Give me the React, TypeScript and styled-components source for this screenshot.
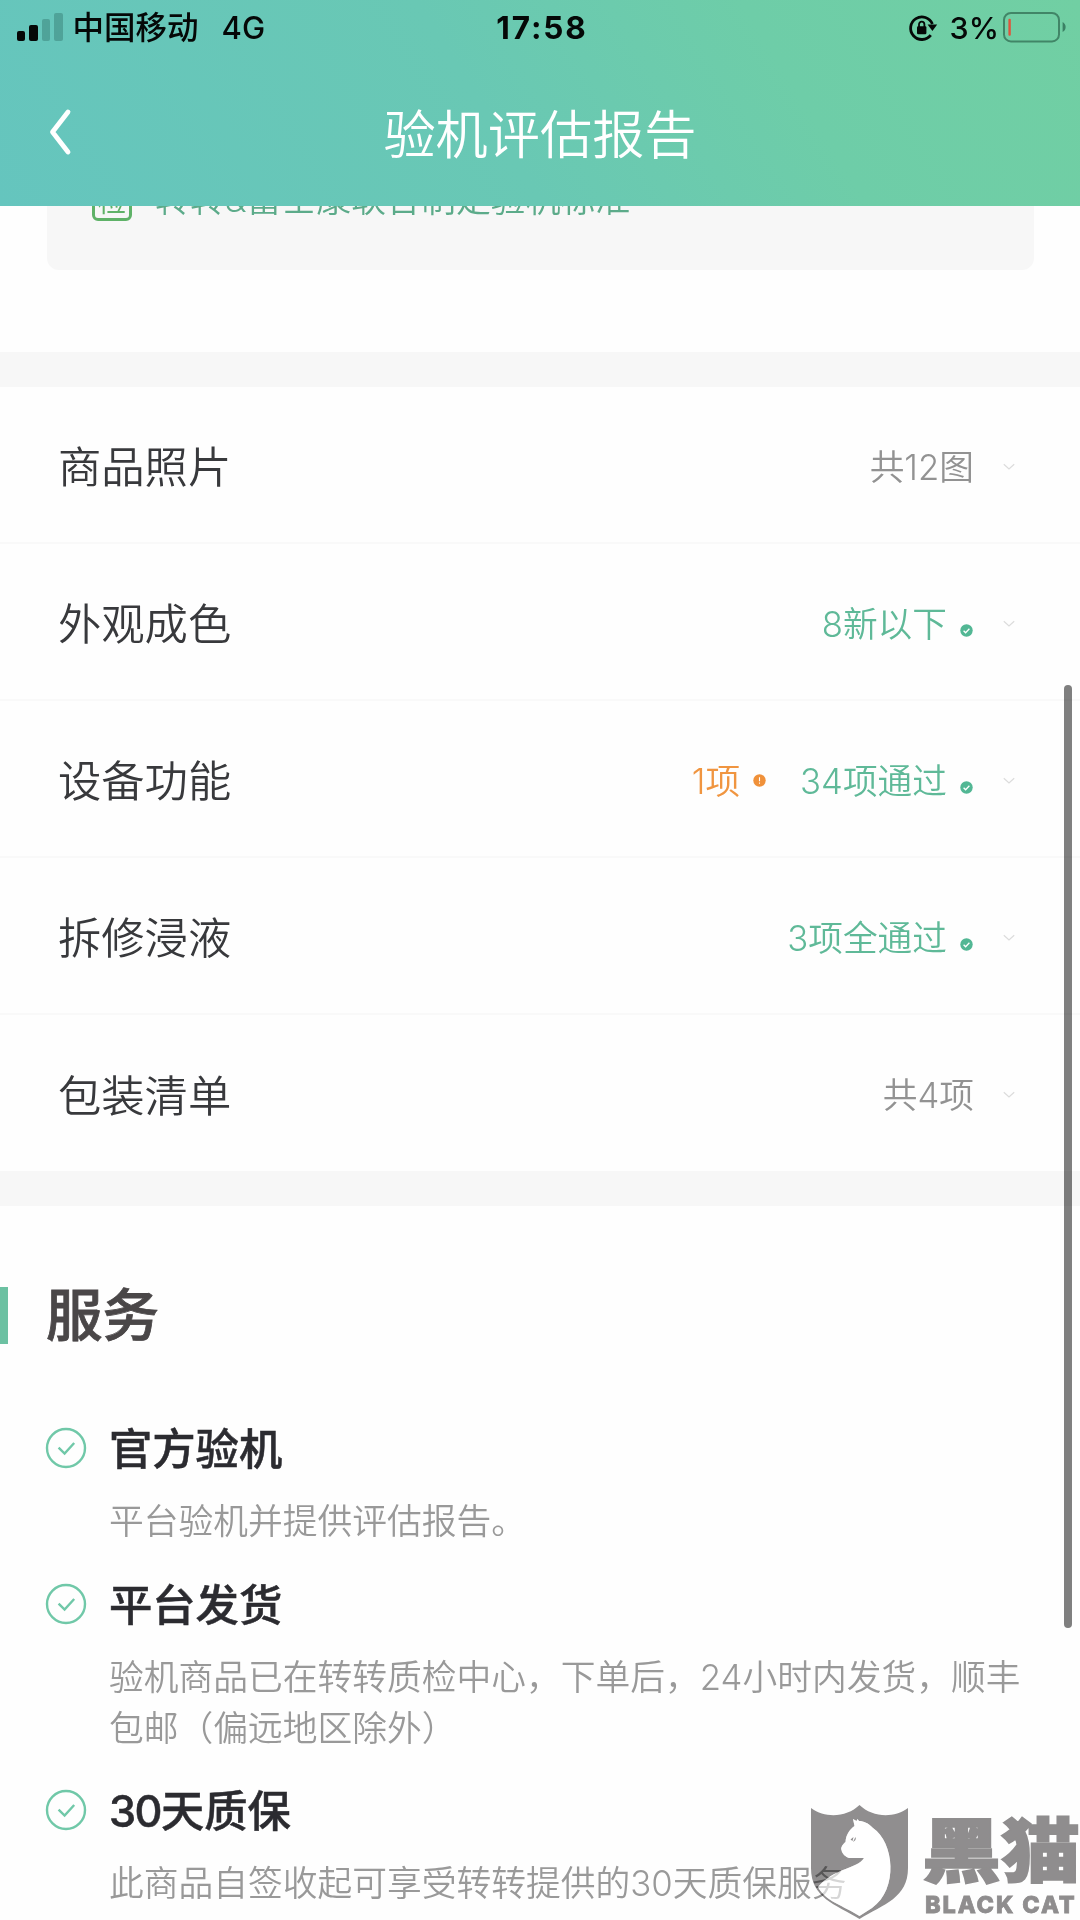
import React from 'react';
import styled, { createGlobalStyle } from 'styled-components';

const GlobalStyle = createGlobalStyle`
  * { box-sizing: border-box; }
  html, body { margin: 0; padding: 0; background: #fff; }
  body { font-family: Inter, "Noto Sans CJK SC", sans-serif; }
  h1, h2, h3, p { margin: 0; }
`;

const Screen = styled.div`
  position: relative;
  width: 1080px;
  height: 1920px;
  overflow: hidden;
  display: flex;
  flex-direction: column;
  background: #fefefe;
`;

const Header = styled.header`
  flex: none;
  height: 206px;
  display: flex;
  flex-direction: column;
  background: linear-gradient(58deg, #65c5be 0%, #69c8b4 45%, #6ecda8 72%, #71cfa3 100%);
`;

const StatusBar = styled.div`
  height: 56px;
  padding: 0 13px 0 17px;
  display: grid;
  grid-template-columns: 1fr auto 1fr;
  align-items: center;
  color: #050807;
`;

const StatusGroup = styled.div<{ $end?: boolean }>`
  display: flex;
  align-items: center;
  justify-content: ${p => (p.$end ? 'flex-end' : 'flex-start')};
`;

const Signal = styled.div`
  display: flex;
  align-items: flex-end;
  gap: 4px;
  height: 29px;
  margin: 0 10px 4px 0;
`;

const SignalBar = styled.i<{ $h: number; $on?: boolean }>`
  width: 8.4px;
  height: ${p => p.$h}px;
  border-radius: 2px;
  background: ${p => (p.$on ? '#050807' : 'rgba(30, 90, 80, 0.32)')};
`;

const StatusText = styled.span<{ $size: number; $weight: number; $gap?: number; $spacing?: number }>`
  font-size: ${p => p.$size}px;
  font-weight: ${p => p.$weight};
  line-height: 40px;
  margin-left: ${p => p.$gap ?? 0}px;
  margin-bottom: 1px;
  letter-spacing: ${p => p.$spacing ?? 0}px;
`;

const BatteryIcon = styled.svg`
  width: 65px;
  height: 32px;
  margin-left: 3px;
`;

const NavBar = styled.div`
  flex: 1;
  padding: 4px 46px;
  display: grid;
  grid-template-columns: 60px 1fr 60px;
  align-items: start;
`;

const BackIcon = styled.svg`
  width: 30px;
  height: 52px;
  margin-top: 46px;
`;

const NavTitle = styled.h1`
  margin-top: 38px;
  text-align: center;
  color: #fff;
  font-size: 52.2px;
  line-height: 74px;
  font-weight: 350;
`;

const StandardArea = styled.section`
  flex: none;
  height: 146px;
  padding: 0 46px 0 47px;
`;

const StandardCard = styled.div`
  height: 64px;
  padding-left: 45px;
  display: flex;
  overflow: hidden;
  gap: 23px;
  background: #f7f7f7;
  border-radius: 0 0 12px 12px;
`;

const InspectMark = styled.span`
  width: 40px;
  height: 40px;
  margin-top: -25px;
  border: 3px solid #5fb268;
  border-radius: 6px;
  color: #5fb268;
  font-size: 29px;
  line-height: 36px;
  text-align: center;
`;

const StandardText = styled.span`
  margin-top: -39px;
  font-size: 34.9px;
  line-height: 64px;
  font-weight: 350;
  color: #5cab8a;
  white-space: nowrap;
`;

const Band = styled.div`
  flex: none;
  height: 35px;
  background: #f7f7f7;
`;

const RowList = styled.div`
  flex: none;
`;

const Row = styled.div`
  height: 157px;
  padding: 0 64px 0 58px;
  display: flex;
  align-items: center;
  border-bottom: 2px solid #f9f9f9;
  &:last-child { border-bottom: 0; height: 156px; }
`;

const RowLabel = styled.span`
  flex: 1;
  padding-top: 5px;
  font-size: 43.3px;
  line-height: 60px;
  font-weight: 350;
  color: #38393c;
`;

const Value = styled.span<{ $tone: 'gray' | 'green' | 'orange' }>`
  padding-top: 4px;
  margin-right: -1px;
  font-size: 34.7px;
  line-height: 50px;
  font-weight: 350;
  color: ${p => ({ gray: '#929292', green: '#5fb998', orange: '#f09540' })[p.$tone]};
`;

const Dot = styled.svg<{ $drop: number; $right: number }>`
  width: 13px;
  height: 13px;
  margin: ${p => p.$drop * 2}px ${p => p.$right}px 0 14px;
`;

const Chevron = styled.svg`
  width: 14px;
  height: 10px;
  margin: 4px 0 0 29px;
`;

const Services = styled.section`
  flex: 1;
  padding-top: 74px;
`;

const ServicesHead = styled.div`
  height: 70px;
  display: flex;
  align-items: center;
  gap: 38px;
`;

const Accent = styled.i`
  width: 8px;
  height: 57px;
  background: #6cc1a2;
`;

const ServicesTitle = styled.h2`
  padding-top: 2px;
  font-size: 56.5px;
  line-height: 70px;
  font-weight: 500;
  color: #4a4748;
  -webkit-text-stroke: 0.8px #4a4748;
`;

const ServiceItem = styled.article<{ $gap: number }>`
  margin-top: ${p => p.$gap}px;
  padding: 0 40px 0 45px;
  display: grid;
  grid-template-columns: 42px 1fr;
  column-gap: 22px;
`;

const CheckIcon = styled.svg`
  width: 42px;
  height: 42px;
  margin-top: 9px;
`;

const ServiceTitle = styled.h3`
  padding-top: 1px;
  font-size: 43.3px;
  line-height: 60px;
  font-weight: 500;
  color: #2b2b30;
  -webkit-text-stroke: 0.5px #2b2b30;
`;

const Digits = styled.span`
  letter-spacing: -1.6px;
`;

const ServiceText = styled.p`
  grid-column: 2;
  margin-top: 17px;
  font-size: 34.75px;
  line-height: 51px;
  font-weight: 350;
  color: #999;
  white-space: nowrap;
`;

const ScrollThumb = styled.div`
  position: absolute;
  left: 1064px;
  top: 685px;
  width: 8px;
  height: 943px;
  border-radius: 4px;
  background: rgba(0, 0, 0, 0.5);
`;

const Watermark = styled.div`
  position: absolute;
  right: 3px;
  bottom: 0;
  display: flex;
  align-items: flex-start;
  gap: 17px;
  height: 116px;
`;

const Shield = styled.svg`
  width: 97px;
  height: 116px;
  .field { mix-blend-mode: multiply; }
`;

const Brand = styled.div`
  width: 152px;
  display: flex;
  flex-direction: column;
  color: #8f8d8e;
`;

const BrandName = styled.span`
  margin-top: 5px;
  font-family: "Noto Sans CJK SC", sans-serif;
  font-size: 76px;
  line-height: 76px;
  font-weight: 900;
  white-space: nowrap;
  transform: scale(1.04, 0.92);
  transform-origin: 50% 50%;
  -webkit-text-stroke: 1.8px #8f8d8e;
`;

const BrandLatin = styled.span`
  margin-top: 7px;
  font-size: 23.5px;
  line-height: 26px;
  font-weight: 800;
  letter-spacing: 1.9px;
  white-space: nowrap;
  -webkit-text-stroke: 0.8px #8f8d8e;
`;

const PassDot = () => (
  <Dot viewBox="0 0 13 13" $drop={9} $right={0}>
    <circle cx="6.5" cy="6.5" r="6.2" fill="#52b794" />
    <path d="M3.6 6.7l2 2 3.8-3.9" fill="none" stroke="#fff" strokeWidth="1.3" />
  </Dot>
);

const WarnDot = () => (
  <Dot viewBox="0 0 13 13" $drop={2} $right={34}>
    <circle cx="6.5" cy="6.5" r="6.2" fill="#f0913a" />
    <path d="M6.5 3.2v4M6.5 8.6v1.2" stroke="#fff" strokeWidth="1.1" />
  </Dot>
);

type RowData = { label: string; note?: string; warn?: string; pass?: string };

const rows: RowData[] = [
  { label: '商品照片', note: '共12图' },
  { label: '外观成色', pass: '8新以下' },
  { label: '设备功能', warn: '1项', pass: '34项通过' },
  { label: '拆修浸液', pass: '3项全通过' },
  { label: '包装清单', note: '共4项' },
];

const services = [
  { title: <>官方验机</>, lines: ['平台验机并提供评估报告。'], gap: 68 },
  { title: <>平台发货</>, lines: ['验机商品已在转转质检中心，下单后，24小时内发货，顺丰', '包邮（偏远地区除外）'], gap: 27 },
  { title: <><Digits>30</Digits>天质保</>, lines: ['此商品自签收起可享受转转提供的30天质保服务'], gap: 26 },
];

export default function App() {
  return (
    <Screen>
      <GlobalStyle />
      <Header>
        <StatusBar>
          <StatusGroup>
            <Signal>
              <SignalBar $h={10} $on />
              <SignalBar $h={16} $on />
              <SignalBar $h={22} />
              <SignalBar $h={28} />
            </Signal>
            <StatusText $size={31.5} $weight={500}>中国移动</StatusText>
            <StatusText $size={31} $weight={500} $gap={23}>4G</StatusText>
          </StatusGroup>
          <StatusText $size={31.5} $weight={750} $spacing={1.9}>17:58</StatusText>
          <StatusGroup $end>
            <svg width="30" height="28" viewBox="0 0 30 28">
              <path d="M22.8 21.2A11.3 11.3 0 1 1 24.4 10" fill="none" stroke="#050807" strokeWidth="2.8" />
              <path d="M19.6 10.5h9.6l-4.8 6.4z" fill="#050807" />
              <rect x="9" y="12.2" width="9.4" height="8" rx="1.2" fill="#050807" />
              <path d="M11 13v-2.6a2.7 2.7 0 0 1 5.4 0V13" fill="none" stroke="#050807" strokeWidth="1.8" />
            </svg>
            <StatusText $size={30.5} $weight={520} $gap={12}>3%</StatusText>
            <BatteryIcon viewBox="0 0 65 32">
              <rect x="2" y="1" width="55" height="28.4" rx="7" fill="none" stroke="#418567" strokeWidth="2" />
              <rect x="6.4" y="6.8" width="2.4" height="17" rx="1" fill="#e0533c" />
              <path d="M60.600 10c4 2.200 4 8 0 10z" fill="#3a8164" />
            </BatteryIcon>
          </StatusGroup>
        </StatusBar>
        <NavBar>
          <BackIcon viewBox="0 0 30 52">
            <path d="M22 6L6.5 26 22 46" fill="none" stroke="#fff" strokeWidth="4.8" strokeLinecap="round" strokeLinejoin="round" />
          </BackIcon>
          <NavTitle>验机评估报告</NavTitle>
        </NavBar>
      </Header>

      <StandardArea>
        <StandardCard>
          <InspectMark>检</InspectMark>
          <StandardText>转转&amp;富士康联合制定验机标准</StandardText>
        </StandardCard>
      </StandardArea>
      <Band />

      <RowList>
        {rows.map(row => (
          <Row key={row.label}>
            <RowLabel>{row.label}</RowLabel>
            {row.note && <Value $tone="gray">{row.note}</Value>}
            {row.warn && (
              <>
                <Value $tone="orange">{row.warn}</Value>
                <WarnDot />
              </>
            )}
            {row.pass && (
              <>
                <Value $tone="green">{row.pass}</Value>
                <PassDot />
              </>
            )}
            <Chevron viewBox="0 0 14 10">
              <path d="M1.8 2.2L7 7l5.2-4.8" fill="none" stroke="#dcdcdc" strokeWidth="1.2" />
            </Chevron>
          </Row>
        ))}
      </RowList>
      <Band />

      <Services>
        <ServicesHead>
          <Accent />
          <ServicesTitle>服务</ServicesTitle>
        </ServicesHead>
        {services.map(item => (
          <ServiceItem key={item.lines[0]} $gap={item.gap}>
            <CheckIcon viewBox="0 0 42 42">
              <circle cx="21" cy="21" r="19" fill="none" stroke="#70c8a8" strokeWidth="2.4" />
              <path d="M13.6 20.6l6 6 9.6-10.6" fill="none" stroke="#70c8a8" strokeWidth="2.4" />
            </CheckIcon>
            <ServiceTitle>{item.title}</ServiceTitle>
            <ServiceText>
              {item.lines.map((line, i) => (
                <React.Fragment key={line}>
                  {i > 0 && <br />}
                  {line}
                </React.Fragment>
              ))}
            </ServiceText>
          </ServiceItem>
        ))}
      </Services>

      <ScrollThumb />

      <Watermark>
        <Shield viewBox="0 0 97 116">
          <path
            className="field"
            fillRule="evenodd"
            fill="#918f90"
            d="M0 4C15 15 36 13 48.500 1C61 13 82 15 97 4V64C97 94 73 100 48.500 115C24 100 0 94 0 64Z M42 15L43.500 22C38 26 35 31 34.500 38C31 41 29.500 44 30.500 46C31 50 35 53 38 54L53 54C46 65 23 64 7 83C14 97 33 102 48.500 112L61 104C88 85 83 38 62 24C57 19 53 17 48 17L46.500 15L45.500 17Z"
          />
          <path
            fill="#fff"
            fillOpacity="0.6"
            d="M42 15L43.500 22C38 26 35 31 34.500 38C31 41 29.500 44 30.500 46C31 50 35 53 38 54L53 54C46 65 23 64 7 83C14 97 33 102 48.500 112L61 104C88 85 83 38 62 24C57 19 53 17 48 17L46.500 15L45.500 17Z"
          />
          <path d="M39.500 35.500l3-2.500-1 4zM44.500 33c1 2-.5 4-2.500 5l1-2z" fill="#918f90" />
        </Shield>
        <Brand>
          <BrandName>黑猫</BrandName>
          <BrandLatin>BLACK CAT</BrandLatin>
        </Brand>
      </Watermark>
    </Screen>
  );
}
